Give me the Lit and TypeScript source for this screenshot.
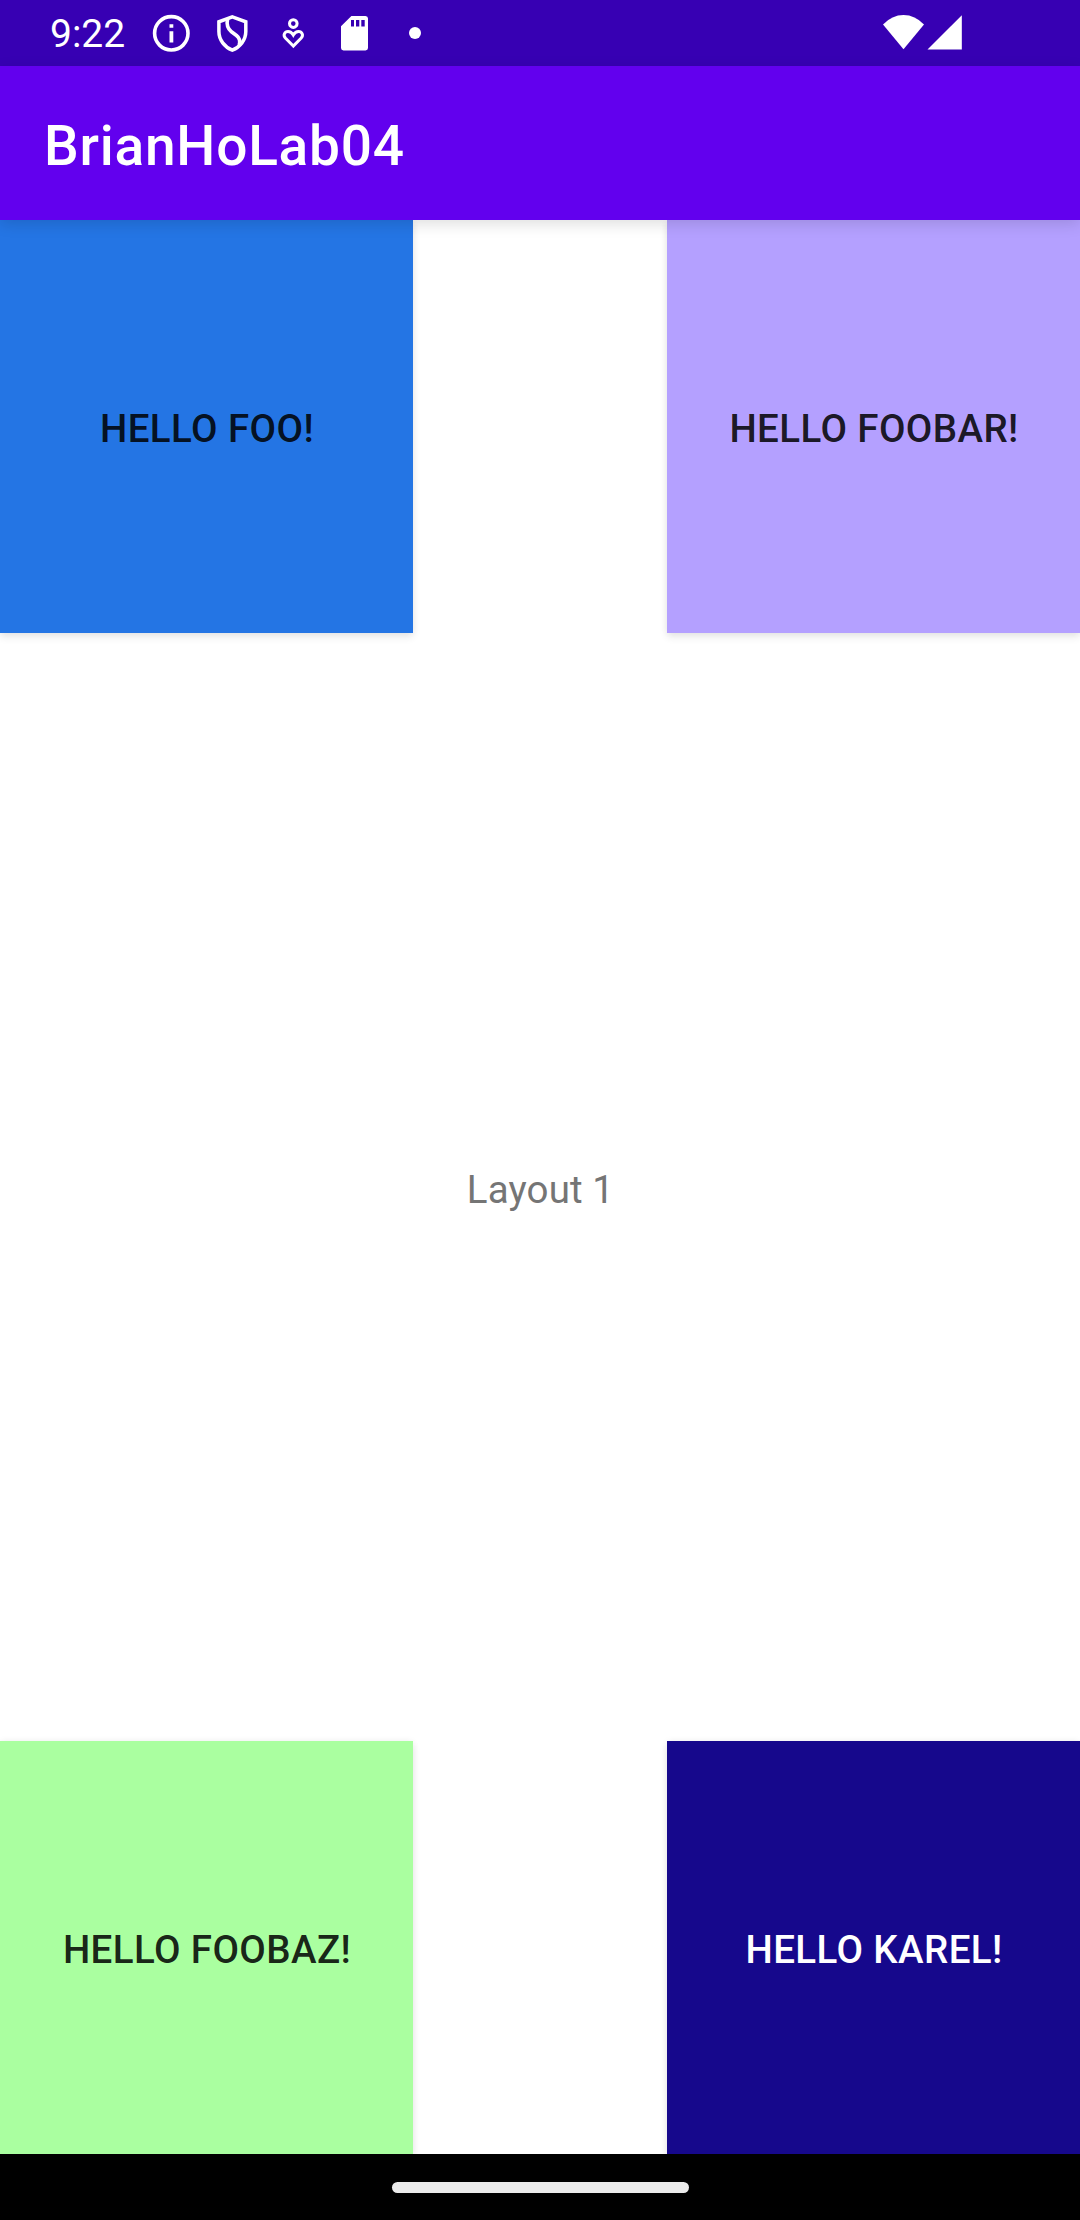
import { LitElement, html, css, svg } from "lit";
import { customElement, property } from "lit/decorators.js";

@customElement("status-bar")
class StatusBar extends LitElement {
  static styles = css`
    :host {
      display: flex;
      height: 66px;
      background: #3700b3;
      color: #fff;
      box-sizing: border-box;
      padding-left: 50px;
      padding-right: 116px;
    }
    .clock {
      width: 91px;
      font-size: 39px;
      line-height: 68px;
      white-space: nowrap;
    }
    .icon {
      display: block;
      flex: none;
    }
    .spacer {
      flex: 1;
    }
  `;

  private icon(content: unknown, width = 61) {
    return html`<svg
      class="icon"
      width=${width}
      height="66"
      viewBox="0 0 ${width} 66"
      fill="none"
      stroke="#fff"
    >
      ${content}
    </svg>`;
  }

  render() {
    return html`
      <span class="clock">9:22</span>
      ${this.icon(svg`
        <circle cx="30.3" cy="33.3" r="16.7" stroke-width="3.6" />
        <path d="M28.5 24.2h3.8v3.5h-3.8zM28.5 31.3h3.8v11.2h-3.8z" fill="#fff" stroke="none" />`)}
      ${this.icon(svg`
        <path d="M30.3 16.8L43.8 21.8V31.5C43.8 40 38 47 30.3 50.2C22.6 47 16.9 40 16.9 31.5V21.8Z" stroke-width="3.5" />
        <path d="M25.6 18.8C24.3 24.5 25.2 28.2 29.5 31.8L34.5 35.5C38 38.3 38.5 41 37.2 45" stroke-width="3.6" />`)}
      ${this.icon(svg`
        <circle cx="30.3" cy="23.6" r="3.8" stroke-width="3" />
        <path d="M30.3 46L22.6 38.2C19.4 34.8 22 31.5 25 31.5C27.5 31.5 29 32.8 30.3 35C31.6 32.8 33.1 31.5 35.6 31.5C38.6 31.5 41.2 34.8 38 38.2Z" stroke-width="3" />`)}
      ${this.icon(svg`
        <path fill="#fff" stroke="none" fill-rule="evenodd" d="M27.4 16H41.5A2.6 2.6 0 0 1 44 18.6V48A2.6 2.6 0 0 1 41.5 50.5H19.5A2.6 2.6 0 0 1 17 48V26.2ZM27 20V26.5H30V20ZM32 20V26.5H35.3V20ZM37.3 20V26.5H40.7V20Z" />`)}
      ${this.icon(svg`<circle cx="30" cy="33" r="6" fill="#fff" stroke="none" />`)}
      <span class="spacer"></span>
      ${this.icon(svg`<path fill="#fff" stroke="none" d="M0 24.5Q9 15 20.5 15T41 24.5L20.5 49.3Z" />`, 44)}
      ${this.icon(svg`<path fill="#fff" stroke="none" d="M0.5 49.6L34.8 15.3V49.6Z" />`, 37)}
    `;
  }
}

@customElement("hello-tile")
class HelloTile extends LitElement {
  @property() label = "";
  @property({ reflect: true }) tone = "";

  static styles = css`
    :host {
      display: flex;
      align-items: center;
      justify-content: center;
      width: 413px;
      height: 413px;
      box-shadow: 0 4px 8px rgba(0, 0, 0, 0.09), 0 0 7px rgba(0, 0, 0, 0.05);
      color: rgba(0, 0, 0, 0.87);
    }
    :host([tone="blue"]) {
      background: #2475e4;
    }
    :host([tone="lilac"]) {
      background: #b4a0ff;
    }
    :host([tone="green"]) {
      background: #aaffa0;
    }
    :host([tone="navy"]) {
      background: #16088c;
      color: #fff;
    }
    .label {
      font-size: 38.5px;
      font-weight: 500;
      letter-spacing: 0.4px;
      line-height: 45px;
      padding-top: 3px;
      padding-left: 1px;
      white-space: nowrap;
    }
  `;

  render() {
    return html`<span class="label">${this.label}</span>`;
  }
}

@customElement("app-root")
class AppRoot extends LitElement {
  static styles = css`
    :host {
      display: flex;
      flex-direction: column;
      width: 1080px;
      height: 2220px;
      overflow: hidden;
      background: #fff;
      font-family: Roboto, sans-serif;
    }
    .toolbar {
      position: relative;
      z-index: 1;
      height: 154px;
      box-sizing: border-box;
      padding: 5px 44px 0;
      display: flex;
      align-items: center;
      background: #6200ee;
      color: #fff;
      font-size: 55px;
      font-weight: 500;
      letter-spacing: 0.78px;
      box-shadow: 0 4px 14px rgba(0, 0, 0, 0.13);
    }
    .content {
      flex: 1;
      display: flex;
      flex-direction: column;
      justify-content: space-between;
      overflow: hidden;
    }
    .row {
      display: flex;
      justify-content: space-between;
    }
    .caption {
      text-align: center;
      font-size: 38.5px;
      letter-spacing: 0.12px;
      line-height: 45px;
      padding-top: 4px;
      padding-left: 1px;
      color: #757575;
    }
    .nav {
      height: 66px;
      background: #000;
      display: flex;
      align-items: center;
      justify-content: center;
    }
    .handle {
      width: 297px;
      height: 11px;
      border-radius: 6px;
      background: #ebebeb;
    }
  `;

  render() {
    return html`
      <status-bar></status-bar>
      <header class="toolbar">BrianHoLab04</header>
      <main class="content">
        <div class="row">
          <hello-tile tone="blue" label="HELLO FOO!"></hello-tile>
          <hello-tile tone="lilac" label="HELLO FOOBAR!"></hello-tile>
        </div>
        <div class="caption">Layout 1</div>
        <div class="row">
          <hello-tile tone="green" label="HELLO FOOBAZ!"></hello-tile>
          <hello-tile tone="navy" label="HELLO KAREL!"></hello-tile>
        </div>
      </main>
      <footer class="nav"><div class="handle"></div></footer>
    `;
  }
}
